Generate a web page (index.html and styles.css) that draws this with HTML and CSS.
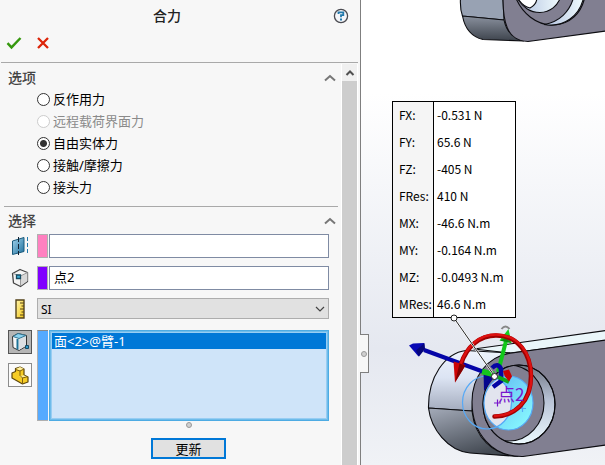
FILE: index.html
```html
<!DOCTYPE html>
<html lang="zh-CN">
<head>
<meta charset="utf-8">
<title>合力</title>
<link rel="stylesheet" href="styles.css">
</head>
<body>
<main class="app">
  <form class="panel">
    <header class="panel-head">
      <h1>合力</h1>
      <button class="icon-btn help" type="button" aria-label="帮助">
        <svg width="16" height="16" viewBox="0 0 16 16"><circle cx="8" cy="8" r="6.6" fill="#f4f6fa" stroke="#4a4a50" stroke-width="1.3"/><path d="M5.5 6V4.3h4.8v2.9H8v2" fill="none" stroke="#2379ab" stroke-width="1.8"/><path d="M7 10.6h2v2H7z" fill="#2379ab"/></svg>
      </button>
      <div class="actions">
        <button class="icon-btn" type="button" aria-label="确定">
          <svg width="16" height="14" viewBox="0 0 16 14"><path d="M1.5 7.2l4 4.2L14.500 2" fill="none" stroke="#36980e" stroke-width="2.4"/></svg>
        </button>
        <button class="icon-btn" type="button" aria-label="取消">
          <svg width="14" height="14" viewBox="0 0 14 14"><path d="M2 2l10 10M12 2L2 12" fill="none" stroke="#dc2408" stroke-width="2.3"/></svg>
        </button>
      </div>
    </header>
    <div class="panel-body">
      <div class="content">
        <section class="group options">
          <div class="group-head"><h2>选项</h2>
            <button class="icon-btn" type="button" aria-label="折叠选项"><svg width="12" height="8" viewBox="0 0 12 8"><path d="M1 6.500l5-4.500 5 4.500" fill="none" stroke="#777" stroke-width="2"/></svg></button>
          </div>
          <div class="radios">
            <label><input type="radio" name="force">反作用力</label>
            <label class="off"><input type="radio" name="force" disabled>远程载荷界面力</label>
            <label><input type="radio" name="force" checked>自由实体力</label>
            <label><input type="radio" name="force">接触/摩擦力</label>
            <label><input type="radio" name="force">接头力</label>
          </div>
        </section>
        <section class="group picks">
          <div class="group-head"><h2>选择</h2>
            <button class="icon-btn" type="button" aria-label="折叠选择"><svg width="12" height="8" viewBox="0 0 12 8"><path d="M1 6.500l5-4.500 5 4.500" fill="none" stroke="#777" stroke-width="2"/></svg></button>
          </div>
          <div class="fields">
            <div class="field">
              <label class="glyph" for="plane" aria-label="基准面">
                <svg width="18" height="20" viewBox="0 0 18 20"><defs><linearGradient id="pl" x2="1" y2="1"><stop stop-color="#a5d5ee"/><stop offset="1" stop-color="#1d6f9c"/></linearGradient></defs><path d="M1.500 5L13 1.500v14L1.500 18.500z" fill="url(#pl)" stroke="#195a7c"/><path d="M7.500 1v18" stroke="#123" stroke-dasharray="5 2"/><path d="M16.500 1v18" stroke="#2379ab" stroke-dasharray="4 2"/></svg>
              </label>
              <span class="swatch pink"></span><input id="plane" type="text">
            </div>
            <div class="field">
              <label class="glyph" for="point" aria-label="点">
                <svg width="18" height="20" viewBox="0 0 18 20"><path d="M1.500 5.500L9 1.500l7.500 3v9L9.500 18.500l-7-3.500z" fill="#f4f4f4" stroke="#444" stroke-width="1.300" stroke-linejoin="round"/><path d="M9.500 8v10l7-5v-8.500z" fill="#d8d8d8"/><path d="M2 5.500L9.500 8l7-3.500M9.500 8v10" fill="none" stroke="#999"/><path d="M5.500 7h4v3.500h-4z" fill="#3fb0d8" stroke="#174b62" stroke-width="1.300"/></svg>
              </label>
              <span class="swatch violet"></span><input id="point" type="text" value="点2">
            </div>
            <div class="field unit">
              <label class="glyph" for="unit" aria-label="单位">
                <svg width="10" height="20" viewBox="0 0 10 20"><defs><linearGradient id="ru" x2="1" y2="1"><stop stop-color="#fff5b0"/><stop offset="1" stop-color="#f2c511"/></linearGradient></defs><path d="M1 1h8v18H1z" fill="url(#ru)" stroke="#54431a" stroke-width="1.400"/><path d="M5 4h4M6.500 7H9M5 10h4M6.500 13H9M5 16h4" stroke="#54431a"/></svg>
              </label>
              <select id="unit"><option>SI</option><option>英制</option></select>
              <svg class="chevron" width="10" height="6" viewBox="0 0 10 6"><path d="M1 1l4 4 4-4" fill="none" stroke="#444" stroke-width="1.200"/></svg>
            </div>
            <div class="field">
              <div class="tools">
                <button class="tool on" type="button" aria-label="面、边线和顶点" aria-pressed="true">
                  <svg width="18" height="20" viewBox="0 0 18 20"><path d="M1.500 4.500L7 1.500l8.500 2V14L8 18.500 2 15.500z" fill="#f6f7f8" stroke="#333" stroke-linejoin="round"/><path d="M8 7v11l7-4.500V4z" fill="#dcdfe2"/><path d="M2 4.500l5-3 8 2L8 6.500z" fill="#8cd2ef" stroke="#34738f"/><path d="M6.500 7v10.500" stroke="#1c7297" stroke-width="2"/><path d="M14.500 13.500h3v3h-3z" fill="#3399c8" stroke="#124b66"/></svg>
                </button>
                <button class="tool" type="button" aria-label="零部件">
                  <svg width="18" height="19" viewBox="0 0 18 19"><path d="M1 7l3.500-1.500V2.500L9 1l4 2v6l4 2v5l-5.500 2L1 12z" fill="#f6cc25" stroke="#5e470d" stroke-width="1.200" stroke-linejoin="round"/><path d="M5 3l4 1.500L13 3 9 1zM10.500 11.500l5.500-.8-3.500-1.500-4 1z" fill="#fff0a0"/><path d="M4.500 3.500L9 5v4.500l2.500 2.500V18M9 5l4-2M11.500 12l5.500-1.500" fill="none" stroke="#80610f"/></svg>
                </button>
              </div>
              <span class="swatch blue"></span>
              <ul class="list" role="listbox" aria-label="所选面"><li role="option" aria-selected="true">面&lt;2&gt;@臂-1</li></ul>
            </div>
          </div>
          <div class="grip"><i class="dot"></i></div>
          <button class="update" type="button">更新</button>
        </section>
      </div>
      <div class="scroll"><button class="icon-btn" type="button" aria-label="向上滚动"><svg width="10" height="8" viewBox="0 0 10 8"><path d="M1.500 6L5 2.500 8.500 6" fill="none" stroke="#505050" stroke-width="2"/></svg></button><div class="thumb"></div></div>
    </div>
    <button class="tab" type="button" aria-label="收起面板"><i class="dot"></i></button>
  </form>

  <section class="view" aria-label="图形区域">
    <svg class="scene" viewBox="361 0 244 465" preserveAspectRatio="xMinYMin slice">
      <defs>
        <linearGradient id="dark" x2="0" y2="1"><stop stop-color="#8a919e"/><stop offset="1" stop-color="#3d434c"/></linearGradient>
        <linearGradient id="side" x1="0" y1="0" x2="0" y2="1"><stop stop-color="#edf3fc"/><stop offset=".45" stop-color="#dce4f3"/><stop offset="1" stop-color="#a3abbd"/></linearGradient>
        <linearGradient id="low" x2=".5" y2="1"><stop stop-color="#a4abb9"/><stop offset="1" stop-color="#434952"/></linearGradient>
        <linearGradient id="bore" x2="0" y2="1"><stop stop-color="#707684"/><stop offset=".45" stop-color="#b9c3d6"/><stop offset="1" stop-color="#edfaff"/></linearGradient>
        <linearGradient id="cyan" x1="0" x2="1" y2="1"><stop stop-color="#5fb4f2"/><stop offset="1" stop-color="#8bffff"/></linearGradient>
        <linearGradient id="hi" x2="1"><stop stop-color="#aebddc"/><stop offset="1" stop-color="#f2fdff"/></linearGradient>
        <clipPath id="hole"><ellipse cx="519" cy="404.500" rx="36" ry="39.500"/></clipPath>
        <clipPath id="disc"><ellipse cx="508.500" cy="403" rx="24.500" ry="27"/></clipPath>
      </defs>

      <!-- upper arm -->
      <g stroke="#0c0c10" stroke-width="1.100">
        <path d="M460.500-2C460 6 461 12 462.500 16L504 20 503-2z" fill="#98a2b3"/>
        <path d="M462.500 16C465 29 472 37 483 39.500L524 41C512 38 506 30 504 20z" fill="url(#dark)"/>
        <path d="M503-2C503 20 506 41 528 41.500L606 31V-2z" fill="#817f91"/>
        <path d="M515-4C522 14 537 25 552 25 570 25 582 13 585-4z" fill="#817f91"/>
        <path d="M574-4C570 12 559 22 544 24.500 564 28 580 16 584-4z" fill="url(#hi)"/>
        <path d="M516-4C523 8 530 12.500 540 12.500 550 12 558 6 561-4z" fill="url(#hi)"/>
        <path d="M517-3C521 4 525 7 530 8 534 6 537 2 537-3z" fill="#fff"/>
      </g>

      <!-- lower arm -->
      <g stroke="#0c0c10" stroke-width="1.100" stroke-linejoin="round">
        <path d="M474 349L606 330.500V341L510 353z" fill="#eaf6fa"/>
        <path d="M428.500 408C428 377 445 353 466 350.500L510 353C489 357 472 378 472 411z" fill="url(#side)"/>
        <path d="M428.500 408C431 429 448 451 470 453L518 456.500C492 454 475 438 472 411z" fill="url(#low)"/>
        <path d="M606 340L512 353C487 356 472 377 472 402 472 433 492 457 523 456.500L606 445z" fill="#817f91"/>
        <ellipse cx="519" cy="404.500" rx="36" ry="39.500" fill="url(#bore)"/>
        <ellipse cx="509" cy="403" rx="35" ry="38" fill="#817f91" clip-path="url(#hole)"/>
        <ellipse cx="519" cy="404.500" rx="36" ry="39.500" fill="none"/>
      </g>
      <ellipse cx="508.500" cy="403" rx="24.500" ry="27" fill="url(#cyan)"/>
      <ellipse cx="487" cy="402.500" rx="24.500" ry="26.500" fill="#e2e4ee" clip-path="url(#disc)"/>
      <g fill="none" stroke="#56a9f6" stroke-width="1.200">
        <ellipse cx="508.500" cy="403" rx="24.500" ry="27"/><ellipse cx="487" cy="402.500" rx="24.500" ry="26.500"/>
        <path d="M519 408.500h7M522.500 405v7"/>
      </g>

      <!-- force triad -->
      <path d="M424 350L484 372" stroke="#0505a8" stroke-width="4"/>
      <path d="M409 345.500l4-2 11-.5.500 6-6 7.500z" fill="#0808b4"/><path d="M416 350.500l8.500-7.500.5 6-6 7.500z" fill="#05057a"/>
      <path d="M498 372l8-31" stroke="#10c81a" stroke-width="4"/>
      <path d="M508.500 329l3 14-12-2.500z" fill="#15cf20"/><path d="M500 340.500l11.500 2.500-5.500-5z" fill="#088b12"/>
      <path d="M501.500 329q4-5 8 0" fill="none" stroke="#888" stroke-width="2"/>
      <path d="M483.500 371l.5 20 11-15z" fill="#06068e"/>
      <path d="M493 387l8-6V369q-3-7-9-1" fill="none" stroke="#0606a4" stroke-width="4.500"/>
      <path d="M482 371.500l12 3" stroke="#15c51d" stroke-width="5.500"/>
      <path d="M498 377l11 5" stroke="#10a81a" stroke-width="4"/>
      <path d="M503 371l6-1.500 3 7-3 5-4-5z" fill="#c90303"/>
      <path d="M461 364C467 346 480 335.500 496 335.500 518 335.500 531 354 531 376 531 402 515 416 494.500 416.500" fill="none" stroke="#9e0000" stroke-width="4.500" stroke-linecap="round"/>
      <path d="M461 363C467 345.500 480 334.500 496 334.500 518 334.500 531.500 353 531.500 376 531.500 401 515 415.500 495 416" fill="none" stroke="#dd1010" stroke-width="2.500" stroke-linecap="round"/>
      <path d="M455 382.500L453.500 361.500 465.500 365z" fill="#ce0505"/><path d="M455 382.500l4.500-19 6 2z" fill="#820000"/>
      <path d="M454 318L494.500 376" stroke="#fff" stroke-width="2"/><path d="M454 318L494.500 376" stroke="#222"/>
      <circle cx="494.500" cy="376.500" r="3" fill="#fff" stroke="#222"/>
      <path d="M494 403h7M497.500 399.500v7" stroke="#7716cc" stroke-width="1.200"/>
      <text class="point-name" x="498" y="401">点2</text>
    </svg>
    <table class="callout">
      <tr><th scope="row">FX:</th><td>-0.531 N</td></tr>
      <tr><th scope="row">FY:</th><td>65.6 N</td></tr>
      <tr><th scope="row">FZ:</th><td>-405 N</td></tr>
      <tr><th scope="row">FRes:</th><td>410 N</td></tr>
      <tr><th scope="row">MX:</th><td>-46.6 N.m</td></tr>
      <tr><th scope="row">MY:</th><td>-0.164 N.m</td></tr>
      <tr><th scope="row">MZ:</th><td>-0.0493 N.m</td></tr>
      <tr><th scope="row">MRes:</th><td>46.6 N.m</td></tr>
    </table>
    <svg class="anchor" width="8" height="8" viewBox="0 0 8 8"><circle cx="4" cy="4" r="3" fill="#fff" stroke="#222"/></svg>
  </section>
</main>
</body>
</html>
```
FILE: styles.css
```css
* { box-sizing: border-box; }
body {
  margin: 0;
  background: #fff;
  color: #000;
  font: 13px/22px "Noto Sans", "Noto Sans CJK SC", sans-serif;
}
button, input, select { font: inherit; color: inherit; margin: 0; }
h1, h2, ul { margin: 0; padding: 0; }
svg { display: block; }

.app { display: flex; height: 100vh; overflow: hidden; }

.panel {
  position: relative;
  z-index: 1;
  display: flex;
  flex-direction: column;
  flex: 0 0 361px;
  background: #f7f7f7;
  border-right: 1px solid #7f7f7f;
}
.icon-btn {
  display: flex;
  align-items: center;
  justify-content: center;
  padding: 0;
  border: 0;
  background: none;
}

.panel-head {
  display: grid;
  grid-template-columns: 1fr auto;
  grid-template-rows: 22px 24px;
  row-gap: 4px;
  margin: 0 2px 0 1px;
  padding-top: 5px;
  height: 63px;
  border-bottom: 1px solid #a9a9a9;
}
.panel-head h1 {
  color: #222;
  font-size: 14px;
  font-weight: 500;
  line-height: 22px;
  text-align: center;
}
.help { width: 16px; height: 22px; margin-right: 9px; }
.actions { display: flex; gap: 14px; padding-left: 5px; grid-column: 1 / 3; }

.panel-body { display: flex; flex: 1; min-height: 0; padding: 1px 2px 0 4px; }
.content { flex: 1; min-width: 0; }
.group { margin-right: 3px; padding-top: 2px; }
.group-head { display: flex; justify-content: space-between; align-items: center; height: 24px; padding: 0 2px 0 4px; }
.group-head h2 { color: #444; font-size: 14px; font-weight: 500; }
.options { padding-bottom: 8px; border-bottom: 1px solid #a9a9a9; }
.picks .group-head { height: 23px; }

.radios { display: flex; flex-direction: column; align-items: flex-start; padding-left: 33px; margin-top: -2px; }
.radios label { display: flex; align-items: center; gap: 3px; }
.radios .off { color: #8a8a8a; }
.radios input {
  appearance: none;
  width: 13px;
  height: 13px;
  border: 1px solid #333;
  border-radius: 50%;
  background: #fff;
}
.radios input:checked { background: radial-gradient(circle, #333 0 3px, #fff 4px); }
.radios input:disabled { border-color: #ccc; }

.fields { display: flex; flex-direction: column; gap: 8px; padding: 2px 9px 0 4px; }
.field { position: relative; display: flex; }
.glyph { display: flex; align-items: center; justify-content: center; width: 24px; margin-right: 5px; }
.swatch { width: 11px; margin-right: 1px; border: 1px solid #b0b0b0; }
.pink { background: #ff80c0; }
.violet { background: #8000ff; }
.blue { background: #55aaff; border-right: 0; border-top-color: #888; }
.field input {
  flex: 1;
  min-width: 0;
  height: 24px;
  padding: 0 4px 4px;
  border: 1px solid #7f8ba3;
  background: #fff;
}
.field select {
  appearance: none;
  flex: 1;
  height: 21px;
  padding: 0 3px;
  border: 1px solid #adadad;
  border-radius: 0;
  background: #e1e1e1;
  font-size: 12px;
}
.chevron { position: absolute; right: 4px; top: 8px; pointer-events: none; }
.unit { margin-bottom: 3px; }
.tools { display: flex; flex-direction: column; gap: 9px; width: 24px; margin-right: 5px; }
.tool {
  display: flex;
  align-items: center;
  justify-content: center;
  height: 24px;
  padding: 0;
  border: 1px solid #8c8c8c;
  background: #fbfbfb;
}
.tool.on { background: #b5b5b5; border-color: #555; }
.list {
  flex: 1;
  height: 91px;
  list-style: none;
  border: 1px solid #4dabe3;
  box-shadow: inset 0 0 0 1px #6fbcea, inset 0 0 0 2px #98cdf3;
  padding: 2px;
  background: #cfe4f9;
}
.list li { padding: 0 2px; background: #0078d7; color: #fff; line-height: 16px; }
.dot { width: 6px; height: 6px; border: 1px solid #999; border-radius: 50%; background: #d0d0d0; }
.grip { display: flex; justify-content: center; align-items: center; height: 7px; padding-left: 36px; margin-bottom: 10px; }
.update {
  display: block;
  width: 75px;
  height: 21px;
  margin-left: 147px;
  padding: 0;
  border: 2px solid #0078d7;
  background: #e1e1e1;
  line-height: 16px;
}

.scroll { display: flex; flex-direction: column; width: 17px; border-left: 1px solid #fff; border-right: 1px solid #fff; }
.scroll .icon-btn { height: 17px; background: #f0f0f0; }
.thumb { flex: 1; background: #cdcdcd; }

.tab {
  position: absolute;
  left: 100%;
  top: 334px;
  width: 9px;
  height: 39px;
  display: flex;
  align-items: center;
  justify-content: center;
  padding: 0;
  border: 1px solid #7f7f7f;
  border-left: 0;
  background: #f7f7f7;
}

.view {
  position: relative;
  flex: 1;
  min-width: 0;
  background: linear-gradient(#fff 0, #fff 20%, #e5e8f0 75%, #f0f2f6 100%);
}
.scene { width: 100%; height: 100%; }
.point-name { fill: #7716cc; font: 17px "Noto Sans CJK SC", sans-serif; }
.callout {
  position: absolute;
  left: 31px;
  top: 101px;
  width: 124px;
  border-collapse: collapse;
  border: 1px solid #000;
  background: #fff;
  font: 12px/26px "Noto Sans CJK SC", sans-serif;
}
.callout th {
  width: 41px;
  padding: 0 0 0 6px;
  border-right: 1px solid #000;
  background: #f5f5f5;
  font-weight: 400;
  text-align: left;
}
.callout td { padding: 0 0 0 3px; }
.callout tr { height: 27px; }
.anchor { position: absolute; left: 89px; top: 314px; }
```
